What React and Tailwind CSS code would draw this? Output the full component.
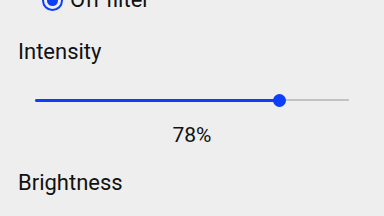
import { useState } from "react";

export default function App() {
  const [value] = useState(78);

  return (
    <div className="w-[384px] h-[216px] overflow-hidden bg-[#eeeeee] text-[#111111] font-['Roboto',sans-serif]">
      <div className="-mt-[11px] h-[22px] pl-[42px] flex items-center gap-[7px]">
        <span className="w-[21px] h-[21px] rounded-full border-2 border-[#0b3ffa] flex items-center justify-center">
          <span className="w-[11px] h-[11px] rounded-full bg-[#0b3ffa]" />
        </span>
        <span className="text-[22px] leading-[22px]">Off filter</span>
      </div>

      <div className="mt-[29px] pl-[18px] text-[22px] leading-[24px]">Intensity</div>

      <div className="mt-[29px] ml-[35px] w-[314px] h-[14px] relative flex items-center">
        <div className="w-full h-[1.5px] bg-[#c2c2c2]" />
        <div
          className="absolute left-0 h-[3px] rounded-full bg-[#0b3ffa]"
          style={{ width: `${value}%` }}
        />
        <div
          className="absolute w-[13px] h-[13px] -ml-[6.5px] rounded-full bg-[#0b3ffa]"
          style={{ left: `${value}%` }}
        />
      </div>

      <div className="mt-[16px] text-center text-[21px] leading-[24px]">{value}%</div>

      <div className="mt-[24px] pl-[18px] text-[22px] leading-[24px]">Brightness</div>
    </div>
  );
}
